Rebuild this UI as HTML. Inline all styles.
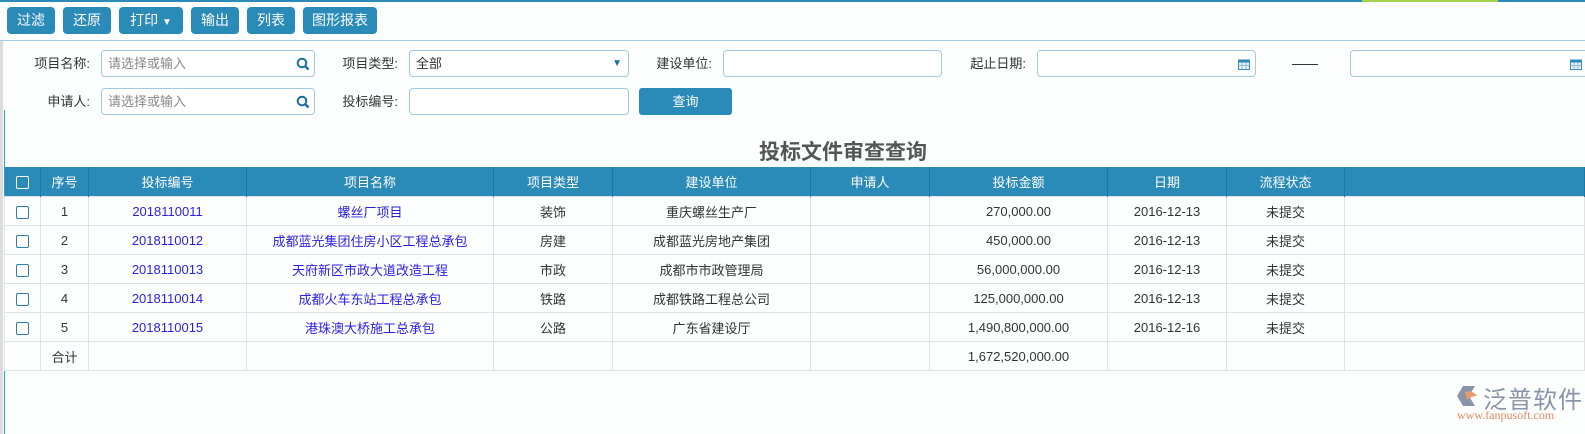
<!DOCTYPE html>
<html><head><meta charset="utf-8"><style>
body{margin:0;width:1585px;height:434px;background:#fdfefe;font-family:"Liberation Sans","Noto Sans CJK SC",sans-serif;font-size:13px;color:#333;position:relative;overflow:hidden}
.a{position:absolute}
.btn{position:absolute;top:7px;height:27px;background:#2a8ab8;color:#fff;border-radius:4px;font-size:14px;line-height:27px;text-align:center}
.lbl{position:absolute;font-size:13px;line-height:27px;text-align:right}
.inp{position:absolute;height:25px;border:1px solid #a3c8e2;border-radius:4px;background:#fff;line-height:25px;font-size:13px;padding-left:6px;box-sizing:content-box}
.ph{color:#888}
table{position:absolute;left:4px;top:167px;border-collapse:collapse;table-layout:fixed;width:1581px}
th{background:#2a8ab8;color:#fff;font-weight:normal;height:29px;border-right:1px solid #1e77a3;font-size:13px;padding:0}
td{height:28px;border:1px solid #e2e2e2;text-align:center;padding:0;font-size:13px}
td.l{color:#2a1ee0}
.cb{display:inline-block;width:11px;height:11px;border:1.5px solid #2a7fae;border-radius:2px;vertical-align:middle;background:#fff}
</style></head><body>
<div class="a" style="left:0;top:0;width:1585px;height:2px;background:#2a8ab8"></div>
<div class="a" style="left:1362px;top:0;width:136px;height:2px;background:#a6d14a"></div>
<div class="btn" style="left:7px;width:48px">过滤</div>
<div class="btn" style="left:63px;width:48px">还原</div>
<div class="btn" style="left:119px;width:64px">打印 <span style="font-size:10px">▼</span></div>
<div class="btn" style="left:191px;width:48px">输出</div>
<div class="btn" style="left:247px;width:48px">列表</div>
<div class="btn" style="left:303px;width:74px">图形报表</div>
<div class="a" style="left:0;top:40px;width:1585px;height:1px;background:#a8cbe5"></div>
<div class="a" style="left:0;top:41px;width:3px;height:393px;background:#dcdcdc"></div>
<div class="a" style="left:4px;top:110px;width:1px;height:324px;background:#2a9ad0"></div>

<div class="lbl" style="left:10px;top:50px;width:80px">项目名称:</div>
<div class="inp" style="left:101px;top:50px;width:206px"><span class="ph">请选择或输入</span>
<svg class="a" style="right:4px;top:6px" width="14" height="14" viewBox="0 0 14 14"><circle cx="6" cy="6" r="4.3" fill="none" stroke="#1d6fa0" stroke-width="2"/><path d="M9 9 L12.5 12.5" stroke="#1d6fa0" stroke-width="2.4"/></svg></div>
<div class="lbl" style="left:310px;top:50px;width:88px">项目类型:</div>
<div class="inp" style="left:409px;top:50px;width:212px">全部<span class="a" style="right:6px;top:0;color:#1d6fa0;font-size:10px">▼</span></div>
<div class="lbl" style="left:620px;top:50px;width:92px">建设单位:</div>
<div class="inp" style="left:723px;top:50px;width:211px"></div>
<div class="lbl" style="left:940px;top:50px;width:86px">起止日期:</div>
<div class="inp" style="left:1037px;top:50px;width:211px"><svg class="a" style="right:5px;top:7px" width="12" height="12" viewBox="0 0 12 12"><rect x="0.5" y="2" width="11" height="9.5" fill="#e8f2fb" stroke="#3a8cc4"/><rect x="0.5" y="2" width="11" height="2.5" fill="#2a8ab8"/><path d="M4 4.5v7M8 4.5v7M0.5 7.5h11" stroke="#7aaed4" stroke-width="0.8"/></svg></div>
<div class="a" style="left:1292px;top:64px;width:26px;height:1px;background:#333"></div>
<div class="inp" style="left:1350px;top:50px;width:235px"><svg class="a" style="right:10px;top:7px" width="12" height="12" viewBox="0 0 12 12"><rect x="0.5" y="2" width="11" height="9.5" fill="#e8f2fb" stroke="#3a8cc4"/><rect x="0.5" y="2" width="11" height="2.5" fill="#2a8ab8"/><path d="M4 4.5v7M8 4.5v7M0.5 7.5h11" stroke="#7aaed4" stroke-width="0.8"/></svg></div>

<div class="lbl" style="left:10px;top:88px;width:80px">申请人:</div>
<div class="inp" style="left:101px;top:88px;width:206px"><span class="ph">请选择或输入</span>
<svg class="a" style="right:4px;top:6px" width="14" height="14" viewBox="0 0 14 14"><circle cx="6" cy="6" r="4.3" fill="none" stroke="#1d6fa0" stroke-width="2"/><path d="M9 9 L12.5 12.5" stroke="#1d6fa0" stroke-width="2.4"/></svg></div>
<div class="lbl" style="left:310px;top:88px;width:88px">投标编号:</div>
<div class="inp" style="left:409px;top:88px;width:212px"></div>
<div class="a" style="left:639px;top:88px;width:93px;height:27px;background:#2a8ab8;border-radius:3px;color:#fff;text-align:center;line-height:27px">查询</div>

<div class="a" style="left:643px;top:136px;width:400px;text-align:center;font-size:21px;font-weight:bold;color:#555">投标文件审查查询</div>

<table>
<colgroup><col style="width:36px"><col style="width:48px"><col style="width:158px"><col style="width:247px"><col style="width:119px"><col style="width:198px"><col style="width:119px"><col style="width:178px"><col style="width:119px"><col style="width:118px"><col></colgroup>
<tr><th><span class="cb" style="border-color:#fff;background:#2a8ab8"></span></th><th>序号</th><th>投标编号</th><th>项目名称</th><th>项目类型</th><th>建设单位</th><th>申请人</th><th>投标金额</th><th>日期</th><th>流程状态</th><th></th></tr>
<tr><td><span class="cb"></span></td><td>1</td><td class="l">2018110011</td><td class="l">螺丝厂项目</td><td>装饰</td><td>重庆螺丝生产厂</td><td></td><td>270,000.00</td><td>2016-12-13</td><td>未提交</td><td></td></tr>
<tr><td><span class="cb"></span></td><td>2</td><td class="l">2018110012</td><td class="l">成都蓝光集团住房小区工程总承包</td><td>房建</td><td>成都蓝光房地产集团</td><td></td><td>450,000.00</td><td>2016-12-13</td><td>未提交</td><td></td></tr>
<tr><td><span class="cb"></span></td><td>3</td><td class="l">2018110013</td><td class="l">天府新区市政大道改造工程</td><td>市政</td><td>成都市市政管理局</td><td></td><td>56,000,000.00</td><td>2016-12-13</td><td>未提交</td><td></td></tr>
<tr><td><span class="cb"></span></td><td>4</td><td class="l">2018110014</td><td class="l">成都火车东站工程总承包</td><td>铁路</td><td>成都铁路工程总公司</td><td></td><td>125,000,000.00</td><td>2016-12-13</td><td>未提交</td><td></td></tr>
<tr><td><span class="cb"></span></td><td>5</td><td class="l">2018110015</td><td class="l">港珠澳大桥施工总承包</td><td>公路</td><td>广东省建设厅</td><td></td><td>1,490,800,000.00</td><td>2016-12-16</td><td>未提交</td><td></td></tr>
<tr><td></td><td>合计</td><td></td><td></td><td></td><td></td><td></td><td>1,672,520,000.00</td><td></td><td></td><td></td></tr>
</table>

<svg class="a" style="left:1455px;top:384px" width="26" height="24" viewBox="0 0 26 24"><path d="M2 12 L8 2 H20 L14 12 L20 22 H8 Z" fill="#8a94a8"/><path d="M10 8 Q18 6 22 12 Q16 12 12 16 Z" fill="#e89a6a"/></svg>
<div class="a" style="left:1483px;top:380px;font-size:24px;color:#8a94a8;letter-spacing:1px">泛普软件</div>
<div class="a" style="left:1457px;top:408px;font-family:'Liberation Serif',serif;font-size:12px;color:#e08a60">www.fanpusoft.com</div>
</body></html>
